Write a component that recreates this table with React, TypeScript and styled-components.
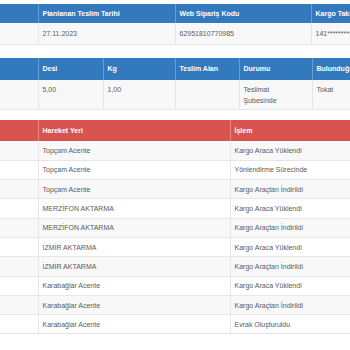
import React, { FC } from 'react';
import styled, { createGlobalStyle } from 'styled-components';

const GlobalStyle = createGlobalStyle`
  html, body {
    margin: 0;
    padding: 0;
    background: #ffffff;
  }
`;

const palette = {
  blue: { bg: '#3379bd', line: '#6b9fd2' },
  red: { bg: '#d9534f', line: '#e98784' },
};

type Tone = keyof typeof palette;

const Page = styled.div`
  width: 350px;
  height: 350px;
  overflow: hidden;
  padding-top: 4px;
  box-sizing: border-box;
  font-family: 'Liberation Sans', Arial, sans-serif;
`;

const Table = styled.table<{ $width: number; $gap: number }>`
  width: ${({ $width }) => $width}px;
  table-layout: fixed;
  border-collapse: collapse;
  margin-bottom: ${({ $gap }) => $gap}px;
  font-size: 7px;
`;

const HeadRow = styled.tr<{ $height: number }>`
  height: ${({ $height }) => $height}px;
`;

const HeadCell = styled.th<{ $tone: Tone }>`
  background: ${({ $tone }) => palette[$tone].bg};
  color: #ffffff;
  font-weight: 700;
  text-align: left;
  vertical-align: middle;
  padding: 0 4px;
  border-left: 1px solid ${({ $tone }) => palette[$tone].line};
  white-space: nowrap;
  overflow: hidden;

  &:first-child {
    border-left: none;
  }
`;

const BodyRow = styled.tr<{ $height: number; $striped?: boolean }>`
  height: ${({ $height }) => $height}px;
  background: ${({ $striped }) => ($striped ? '#f8f8f8' : '#ffffff')};
  border-bottom: 1px solid #e6e6e6;
`;

const Cell = styled.td<{ $top?: boolean }>`
  color: #5a5a5a;
  vertical-align: ${({ $top }) => ($top ? 'top' : 'middle')};
  padding: ${({ $top }) => ($top ? '4px 4px 0' : '0 4px')};
  line-height: 11px;
  border-left: 1px solid #e6e6e6;
  overflow: hidden;

  &:first-child {
    border-left: none;
  }
`;

const movements = [
  ['Topçam Acente', 'Kargo Araca Yüklendi'],
  ['Topçam Acente', 'Yönlendirme Sürecinde'],
  ['Topçam Acente', 'Kargo Araçtan İndirildi'],
  ['MERZİFON AKTARMA', 'Kargo Araca Yüklendi'],
  ['MERZİFON AKTARMA', 'Kargo Araçtan İndirildi'],
  ['İZMİR AKTARMA', 'Kargo Araca Yüklendi'],
  ['İZMİR AKTARMA', 'Kargo Araçtan İndirildi'],
  ['Karabağlar Acente', 'Kargo Araca Yüklendi'],
  ['Karabağlar Acente', 'Kargo Araçtan İndirildi'],
  ['Karabağlar Acente', 'Evrak Oluşturuldu'],
];

const Cols: FC<{ widths: number[] }> = ({ widths }) => (
  <colgroup>
    {widths.map((w, i) => (
      <col key={i} style={{ width: w }} />
    ))}
  </colgroup>
);

const App: FC = () => (
  <Page>
    <GlobalStyle />

    <Table $width={461} $gap={13}>
      <Cols widths={[38, 137, 136, 150]} />
      <thead>
        <HeadRow $height={19}>
          <HeadCell $tone="blue" />
          <HeadCell $tone="blue">Planlanan Teslim Tarihi</HeadCell>
          <HeadCell $tone="blue">Web Sipariş Kodu</HeadCell>
          <HeadCell $tone="blue">Kargo Takip No</HeadCell>
        </HeadRow>
      </thead>
      <tbody>
        <BodyRow $height={21} $striped>
          <Cell />
          <Cell>27.11.2023</Cell>
          <Cell>62951810770985</Cell>
          <Cell>141*********</Cell>
        </BodyRow>
      </tbody>
    </Table>

    <Table $width={432} $gap={10}>
      <Cols widths={[38, 65, 72, 64, 73, 120]} />
      <thead>
        <HeadRow $height={22}>
          <HeadCell $tone="blue" />
          <HeadCell $tone="blue">Desi</HeadCell>
          <HeadCell $tone="blue">Kg</HeadCell>
          <HeadCell $tone="blue">Teslim Alan</HeadCell>
          <HeadCell $tone="blue">Durumu</HeadCell>
          <HeadCell $tone="blue">Bulunduğu Şube</HeadCell>
        </HeadRow>
      </thead>
      <tbody>
        <BodyRow $height={30} $striped>
          <Cell $top />
          <Cell $top>5,00</Cell>
          <Cell $top>1,00</Cell>
          <Cell $top />
          <Cell $top>
            Teslimat
            <br />
            Şubesinde
          </Cell>
          <Cell $top>Tokat</Cell>
        </BodyRow>
      </tbody>
    </Table>

    <Table $width={430} $gap={0}>
      <Cols widths={[38, 192, 200]} />
      <thead>
        <HeadRow $height={21}>
          <HeadCell $tone="red" />
          <HeadCell $tone="red">Hareket Yeri</HeadCell>
          <HeadCell $tone="red">İşlem</HeadCell>
        </HeadRow>
      </thead>
      <tbody>
        {movements.map(([place, action], i) => (
          <BodyRow key={i} $height={19.3} $striped={i % 2 === 0}>
            <Cell />
            <Cell>{place}</Cell>
            <Cell>{action}</Cell>
          </BodyRow>
        ))}
      </tbody>
    </Table>
  </Page>
);

export default App;
